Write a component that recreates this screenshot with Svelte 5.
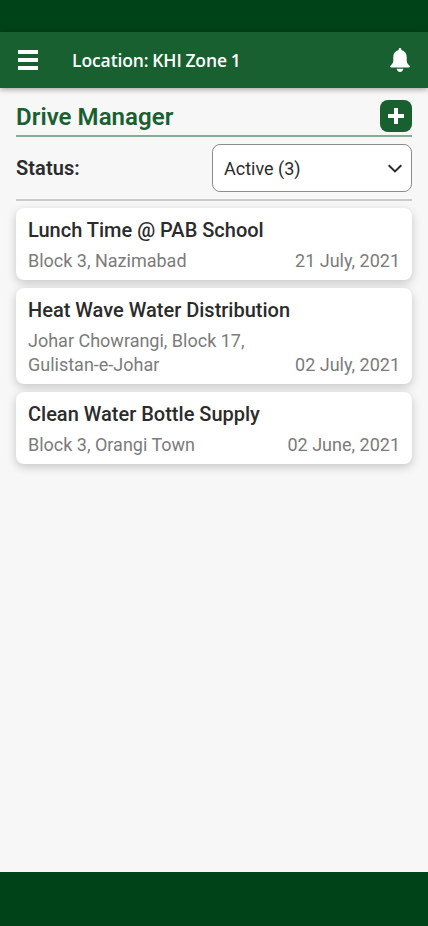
<script>
  const drives = [
    { title: 'Lunch Time @ PAB School', place: 'Block 3, Nazimabad', date: '21 July, 2021' },
    { title: 'Heat Wave Water Distribution', place: 'Johar Chowrangi, Block 17, Gulistan-e-Johar', date: '02 July, 2021' },
    { title: 'Clean Water Bottle Supply', place: 'Block 3, Orangi Town', date: '02 June, 2021' }
  ];
</script>

<div class="screen">
  <div class="status-bar"></div>
  <header>
    <button class="menu" aria-label="Menu">
      <svg width="20" height="20" viewBox="0 0 20 20"><path d="M0 0h20v4H0zM0 8h20v4H0zM0 16h20v4H0z" fill="#fff" /></svg>
    </button>
    <span class="location">Location: KHI Zone 1</span>
    <button class="bell" aria-label="Notifications">
      <svg width="20" height="24" viewBox="0 0 20 24">
        <path d="M10 0C9.2 0 8.7.6 8.7 1.4V2.1C5.2 2.8 3.3 5.5 3.3 9V12.5C3.3 14.8 2.2 16.2.6 17.5C-.4 18.4 0 19.5 1.2 19.5H18.8C20 19.5 20.4 18.4 19.4 17.5C17.8 16.2 16.7 14.8 16.7 12.5V9C16.7 5.5 14.8 2.8 11.3 2.1V1.4C11.3.6 10.8 0 10 0ZM6.6 20.8C7 22.7 8.2 24 10 24S13 22.7 13.4 20.8Z" fill="#fff" />
      </svg>
    </button>
  </header>

  <main>
    <div class="heading">
      <h1>Drive Manager</h1>
      <button class="add" aria-label="Add drive">
        <svg width="16" height="16" viewBox="0 0 16 16"><path d="M6 0h4v6h6v4h-6v6H6v-6H0V6h6z" fill="#fff" /></svg>
      </button>
    </div>
    <div class="filter">
      <span class="label">Status:</span>
      <button class="select">
        <span>Active (3)</span>
        <svg width="14" height="9" viewBox="0 0 14 9"><path d="M.7 1.2 7 7.4 13.3 1.2" fill="none" stroke="#2b2b2b" stroke-width="2" /></svg>
      </button>
    </div>
    <div class="list">
      {#each drives as drive}
        <article>
          <h2>{drive.title}</h2>
          <div class="meta">
            <span class="place">{drive.place}</span>
            <span class="date">{drive.date}</span>
          </div>
        </article>
      {/each}
    </div>
  </main>
  <footer></footer>
</div>

<style>
  .screen {
    display: flex;
    flex-direction: column;
    width: 428px;
    height: 926px;
    background: #f7f7f7;
    color: #2b2b2b;
    font-family: Roboto, sans-serif;
  }
  button { border: 0; padding: 0; background: none; font: inherit; color: inherit; }
  svg { display: block; }
  .status-bar { height: 32px; flex: none; background: #004318; }
  header {
    display: flex;
    align-items: center;
    flex: none;
    box-sizing: border-box;
    height: 56px;
    padding: 0 18px;
    background: #186030;
    box-shadow: 0 1px 6px rgba(0, 0, 0, 0.4);
  }
  .location {
    flex: 1;
    margin-left: 34px;
    color: #fff;
    font: 600 17.5px/24px "Open Sans", "Noto Sans", sans-serif;
    letter-spacing: -0.1px;
    word-spacing: -0.7px;
    white-space: nowrap;
  }
  main { flex: 1; padding: 8px 16px 0; }
  .heading {
    display: flex;
    align-items: center;
    justify-content: space-between;
    box-sizing: border-box;
    height: 41px;
    padding: 4px 0 3px;
    border-bottom: 2px solid #84ac90;
  }
  h1 { margin: 0; color: #186030; font-size: 24px; font-weight: 600; line-height: 32px; padding-top: 2px; letter-spacing: 0.06px; }
  .add {
    display: grid;
    place-items: center;
    width: 32px;
    height: 32px;
    border-radius: 8px;
    background: #186030;
  }
  .filter {
    display: flex;
    align-items: center;
    justify-content: space-between;
    box-sizing: border-box;
    height: 64px;
    padding: 7px 0;
    border-bottom: 2px solid #cbcbcb;
  }
  .label { font-size: 20px; font-weight: 600; line-height: 24px; letter-spacing: 0.08px; }
  .select {
    display: flex;
    align-items: center;
    justify-content: space-between;
    box-sizing: border-box;
    width: 200px;
    height: 48px;
    padding: 1px 9px 0 11px;
    border: 1px solid #8b8b8b;
    border-radius: 8px;
    background: #fff;
    font-size: 18px;
    line-height: 24px;
  }
  .list { display: flex; flex-direction: column; gap: 8px; padding-top: 7px; }
  article {
    padding: 10px 12px 7px;
    border-radius: 8px;
    background: #fff;
    box-shadow: 0 3px 10px rgba(0, 0, 0, 0.2);
  }
  h2 { margin: 0 0 7px; font-size: 20px; font-weight: 500; line-height: 24px; }
  .meta {
    display: flex;
    align-items: flex-end;
    justify-content: space-between;
    color: #7b7b7b;
    font-size: 18px;
    line-height: 24px;
  }
  .place { max-width: 240px; }
  .date { white-space: nowrap; }
  footer { height: 54px; flex: none; background: #004318; }
</style>
